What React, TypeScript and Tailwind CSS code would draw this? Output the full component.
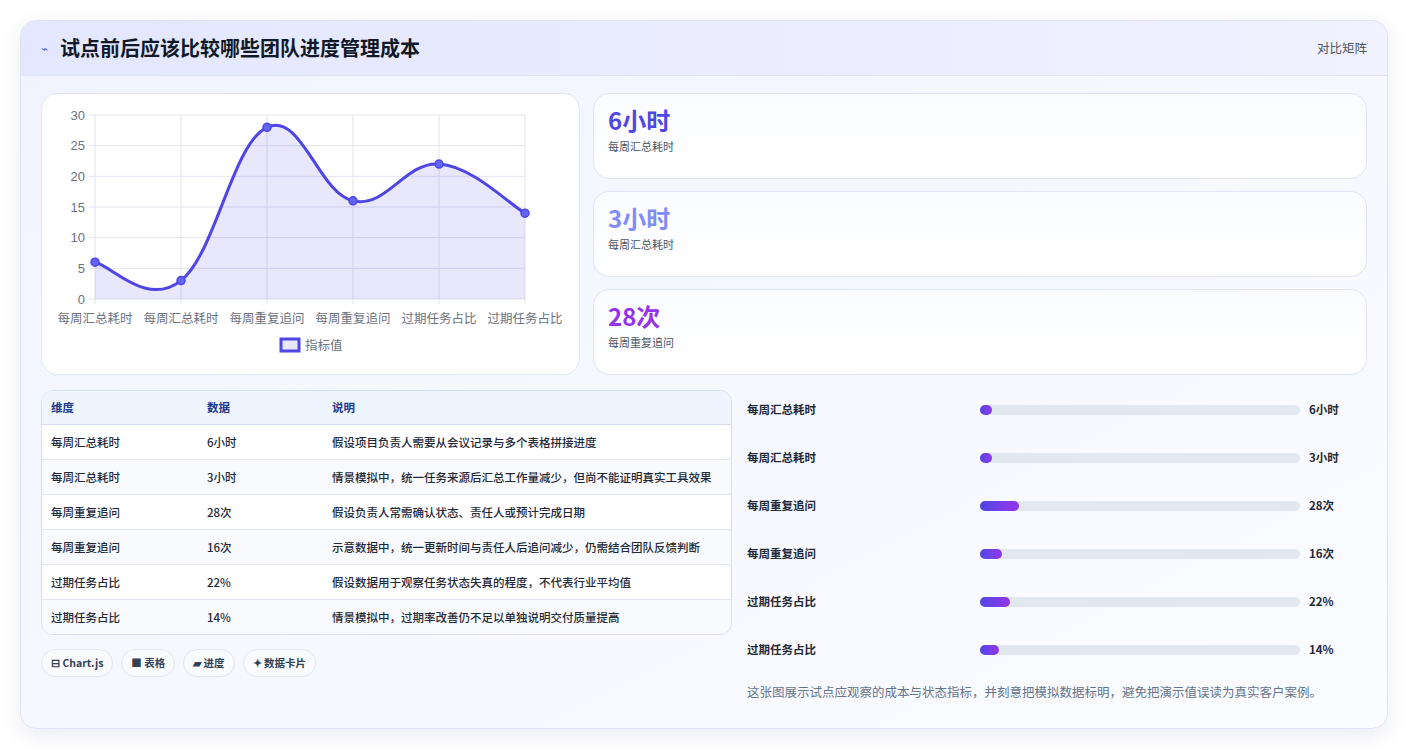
import React from 'react';

const font = { fontFamily: '"Noto Sans CJK SC", "Noto Sans", sans-serif' };

const pts = [6, 3, 28, 16, 22, 14];
const labels = ['每周汇总耗时', '每周汇总耗时', '每周重复追问', '每周重复追问', '过期任务占比', '过期任务占比'];

function Chart() {
  // plot area in svg coords (svg placed at card origin)
  const x0 = 53, x1 = 483, y0 = 205, yTop = 21;
  const xs = pts.map((_, i) => x0 + (i * (x1 - x0)) / 5);
  const ys = pts.map((v) => y0 - (v / 30) * (y0 - yTop));
  const t = 0.4;
  let d = `M${xs[0]},${ys[0]}`;
  for (let i = 0; i < 5; i++) {
    const p0 = [xs[Math.max(i - 1, 0)], ys[Math.max(i - 1, 0)]];
    const p1 = [xs[i], ys[i]];
    const p2 = [xs[i + 1], ys[i + 1]];
    const p3 = [xs[Math.min(i + 2, 5)], ys[Math.min(i + 2, 5)]];
    const c1 = [p1[0] + ((p2[0] - p0[0]) * t) / 2, p1[1] + ((p2[1] - p0[1]) * t) / 2];
    const c2 = [p2[0] - ((p3[0] - p1[0]) * t) / 2, p2[1] - ((p3[1] - p1[1]) * t) / 2];
    d += ` C${c1[0]},${c1[1]} ${c2[0]},${c2[1]} ${p2[0]},${p2[1]}`;
  }
  const area = `${d} L${x1},${y0} L${x0},${y0} Z`;
  return (
    <svg width="538" height="281" className="block">
      {[0, 5, 10, 15, 20, 25, 30].map((v) => {
        const y = y0 - (v / 30) * (y0 - yTop);
        return (
          <g key={v}>
            <line x1={x0 - 6} x2={x1} y1={y} y2={y} stroke="#e2e4ee" />
            <text x={x0 - 10} y={y + 4.5} textAnchor="end" fontSize="13" fill="#6b7280" fontFamily="Liberation Sans, sans-serif">{v}</text>
          </g>
        );
      })}
      {xs.map((x, i) => (
        <g key={i}>
          <line x1={x} x2={x} y1={yTop} y2={y0 + 5} stroke="#e2e4ee" />
          <text x={x} y={y0 + 24} textAnchor="middle" fontSize="12.5" fill="#6b7280" style={font}>{labels[i]}</text>
        </g>
      ))}
      <path d={area} fill="rgba(79,70,229,0.13)" />
      <path d={d} fill="none" stroke="#4f46e5" strokeWidth="3" />
      {xs.map((x, i) => (
        <circle key={i} cx={x} cy={ys[i]} r="4" fill="#6366f1" stroke="#4f46e5" strokeWidth="1.5" />
      ))}
      <rect x="239" y="245" width="18" height="12" fill="rgba(79,70,229,0.13)" stroke="#4f46e5" strokeWidth="3" />
      <text x="263" y="256" fontSize="12.5" fill="#6b7280" style={font}>指标值</text>
    </svg>
  );
}

const stats = [
  { v: '6小时', l: '每周汇总耗时', c: 'text-[#4f46e5]' },
  { v: '3小时', l: '每周汇总耗时', c: 'text-[#818cf8]' },
  { v: '28次', l: '每周重复追问', c: 'text-[#9333ea]' },
];

const rows = [
  ['每周汇总耗时', '6小时', '假设项目负责人需要从会议记录与多个表格拼接进度'],
  ['每周汇总耗时', '3小时', '情景模拟中，统一任务来源后汇总工作量减少，但尚不能证明真实工具效果'],
  ['每周重复追问', '28次', '假设负责人常需确认状态、责任人或预计完成日期'],
  ['每周重复追问', '16次', '示意数据中，统一更新时间与责任人后追问减少，仍需结合团队反馈判断'],
  ['过期任务占比', '22%', '假设数据用于观察任务状态失真的程度，不代表行业平均值'],
  ['过期任务占比', '14%', '情景模拟中，过期率改善仍不足以单独说明交付质量提高'],
];

const bars = [
  ['每周汇总耗时', '6小时', 12],
  ['每周汇总耗时', '3小时', 12],
  ['每周重复追问', '28次', 39],
  ['每周重复追问', '16次', 22],
  ['过期任务占比', '22%', 30],
  ['过期任务占比', '14%', 19],
] as const;

export default function App() {
  return (
    <div className="w-[1408px] h-[750px] bg-white pt-5 px-5" style={font}>
      <div className="h-[709px] rounded-2xl border border-[#dfe3f3] bg-gradient-to-br from-[#f1f4ff] to-[#fbfcff] shadow-[0_6px_20px_rgba(80,90,160,0.12)] overflow-hidden">
        <div className="h-[55px] flex items-center justify-between px-5 bg-gradient-to-r from-[#e3e7ff] to-[#f1f1ff] border-b border-[#e0e4f5]">
          <div className="flex items-center gap-3">
            <span className="text-[#4f6ef0] text-[12px]">⌁</span>
            <span className="text-[20px] font-bold text-[#111827]">试点前后应该比较哪些团队进度管理成本</span>
          </div>
          <span className="text-[12.5px] text-[#4b5563]">对比矩阵</span>
        </div>
        <div className="px-5 pt-[17px]">
          <div className="flex gap-[13px]">
            <div className="w-[539px] h-[282px] bg-white rounded-2xl border border-[#e3e6f0] overflow-hidden">
              <Chart />
            </div>
            <div className="flex-1 flex flex-col gap-3">
              {stats.map((s, i) => (
                <div key={i} className="h-[86px] rounded-2xl border border-[#dfe5f5] bg-gradient-to-b from-[#fbfcff] to-white px-[14px] pt-[10px]">
                  <div className={`text-[24px] font-bold leading-[32px] ${s.c}`}>{s.v}</div>
                  <div className="text-[11px] text-[#4b5563] mt-[2px]">{s.l}</div>
                </div>
              ))}
            </div>
          </div>
          <div className="flex gap-[13px] mt-[15px]">
            <div className="w-[691px]">
              <div className="rounded-xl border border-[#d8def0] overflow-hidden bg-white">
                <table className="w-full table-fixed text-[11.5px] text-[#1f2937]">
                  <thead>
                    <tr className="bg-[#eef5ff] text-[#1e3a8a] font-bold h-[33px] border-b border-[#d8def0]">
                      <td className="pl-[9px] w-[165px]">维度</td>
                      <td className="w-[125px]">数据</td>
                      <td>说明</td>
                    </tr>
                  </thead>
                  <tbody>
                    {rows.map((r, i) => (
                      <tr key={i} className={`border-b border-[#e3e7f0] last:border-b-0 ${i % 2 ? 'bg-[#f8fafd]' : 'bg-white'}`}>
                        <td className="pl-[9px] py-[8px] align-top font-medium leading-[18px]">{r[0]}</td>
                        <td className="py-[8px] align-top font-medium leading-[18px]">{r[1]}</td>
                        <td className="py-[8px] pr-[14px] align-top leading-[18px] font-medium">{r[2]}</td>
                      </tr>
                    ))}
                  </tbody>
                </table>
              </div>
              <div className="flex gap-[8px] mt-[14px]">
                {['⊟ Chart.js', '■ 表格', '▰ 进度', '✦ 数据卡片'].map((p) => (
                  <span key={p} className="h-[28px] px-[9px] rounded-full border border-[#e2e6f0] bg-[#f9fbff] text-[10.5px] font-bold text-[#334155] flex items-center">{p}</span>
                ))}
              </div>
            </div>
            <div className="flex-1 pl-[2px] pr-[20px]">
              <div className="flex flex-col gap-[29px] pt-[10px]">
                {bars.map((b, i) => (
                  <div key={i} className="flex items-center h-[19px] text-[11.5px] font-bold text-[#1f2937] whitespace-nowrap">
                    <span className="w-[233px]">{b[0]}</span>
                    <div className="w-[320px] h-[10px] rounded-full bg-[#e2e8f0]">
                      <div className="h-full rounded-full bg-gradient-to-r from-[#4f46e5] to-[#9333ea]" style={{ width: b[2] }} />
                    </div>
                    <span className="ml-[9px]">{b[1]}</span>
                  </div>
                ))}
              </div>
              <div className="mt-[24px] text-[12.5px] text-[#64748b]">这张图展示试点应观察的成本与状态指标，并刻意把模拟数据标明，避免把演示值误读为真实客户案例。</div>
            </div>
          </div>
        </div>
      </div>
    </div>
  );
}
